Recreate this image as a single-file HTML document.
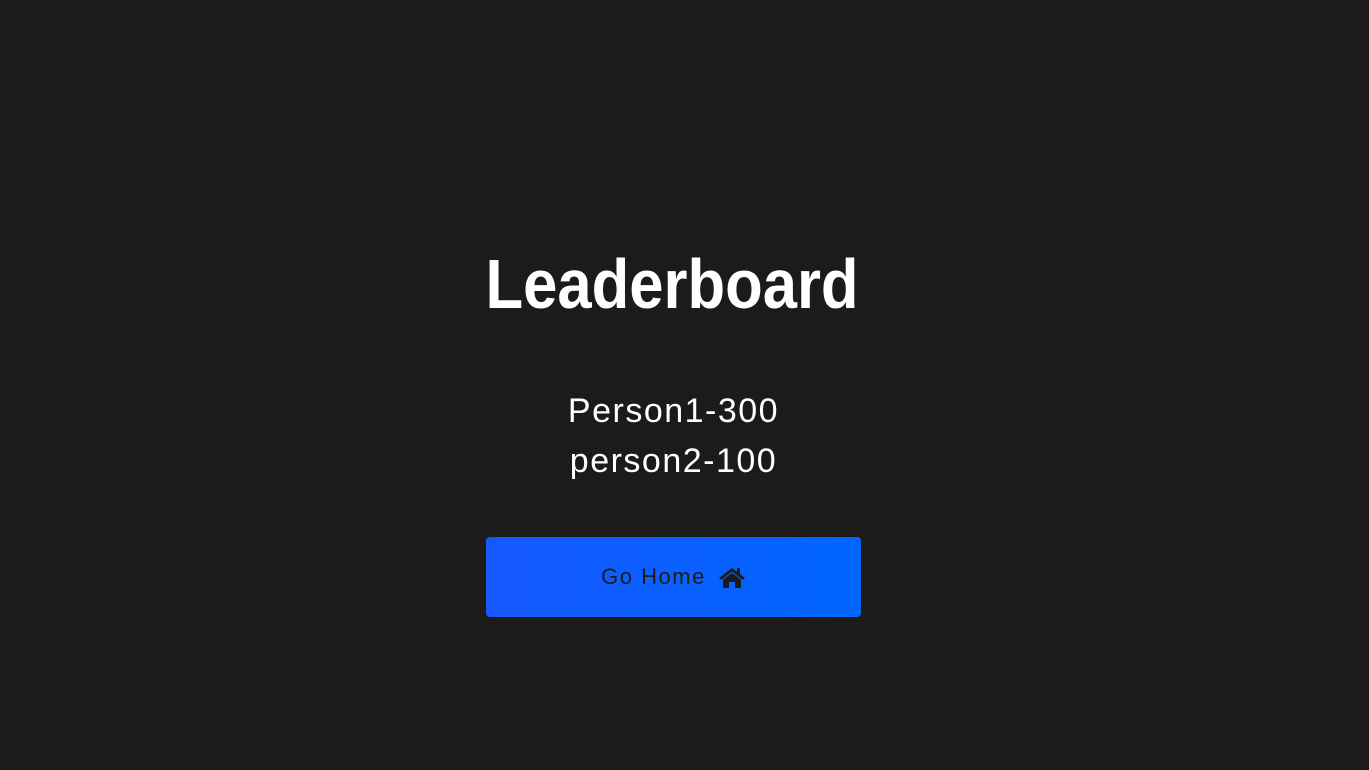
<!DOCTYPE html>
<html><head><style>
html,body{margin:0;padding:0;background:#1c1b1a;width:1369px;height:770px;overflow:hidden;font-family:"Liberation Sans",sans-serif;color:#fff}
.t{position:absolute;left:272px;top:246px;width:800px;text-align:center;font-weight:bold;font-size:70px;line-height:76px;white-space:nowrap}
.t span{display:inline-block;transform:scaleX(0.88);transform-origin:center}
.p{position:absolute;left:486px;width:375px;text-align:center;font-size:34px;line-height:50px;top:386px;letter-spacing:1.5px}
.b{position:absolute;left:486px;top:537px;width:375px;height:80px;border-radius:4px;background:linear-gradient(90deg,#1558ff,#0066ff);display:flex;align-items:center;justify-content:center;color:#1c1b1a;font-size:22px;letter-spacing:1.5px}
.b svg{margin-left:12px}
</style></head><body>
<div class="t"><span>Leaderboard</span></div>
<div class="p">Person1-300<br>person2-100</div>
<div class="b">Go Home<svg width="28" height="24" viewBox="0 0 28 24"><path d="M14 3 L1 13 L3 15 L14 6.5 L25 15 L27 13 L22 9 V3 H19 V6.7 Z" fill="#1c1b1a"/><path d="M5 14.5 L14 8 L23 14.5 V23 H17 V17 H11 V23 H5 Z" fill="#1c1b1a"/></svg></div>
</body></html>
